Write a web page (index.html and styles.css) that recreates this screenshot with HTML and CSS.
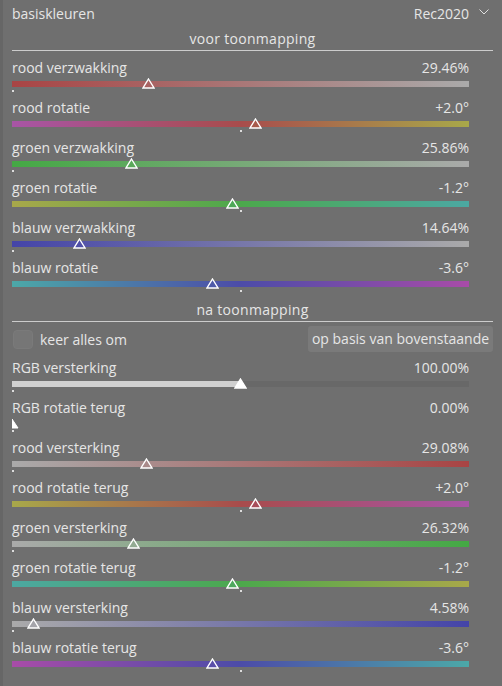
FILE: index.html
```html
<!DOCTYPE html>
<html>
<head>
<meta charset="utf-8">
<link rel="stylesheet" href="styles.css">
</head>
<body>
<div class="panel">
  <div class="header">
    <span>basiskleuren</span>
    <span class="combo">Rec2020<svg class="chev" width="10" height="6" viewBox="0 0 10 6"><polyline points="0.5,0.5 5,5 9.5,0.5" fill="none" stroke="#e0e0e0" stroke-width="1"/></svg></span>
  </div>

  <div class="section">voor toonmapping</div>

  <div class="sliders">
    <div class="slider">
      <div class="slabel"><span>rood verzwakking</span><span>29.46%</span></div>
      <div class="track red-att">
        <svg class="thumb" style="left:129.5px" width="13" height="11" viewBox="0 0 13 11"><polygon points="6.5,1 12,10 1,10" fill="#a96363" stroke="#fff" stroke-width="1.4"/></svg>
        <span class="dot dot-left"></span>
      </div>
    </div>
    <div class="slider">
      <div class="slabel"><span>rood rotatie</span><span>+2.0°</span></div>
      <div class="track red-rot">
        <svg class="thumb" style="left:236.5px" width="13" height="11" viewBox="0 0 13 11"><polygon points="6.5,1 12,10 1,10" fill="#a85a4c" stroke="#fff" stroke-width="1.4"/></svg>
        <span class="dot dot-mid"></span>
      </div>
    </div>
    <div class="slider">
      <div class="slabel"><span>groen verzwakking</span><span>25.86%</span></div>
      <div class="track green-att">
        <svg class="thumb" style="left:112.5px" width="13" height="11" viewBox="0 0 13 11"><polygon points="6.5,1 12,10 1,10" fill="#5aa95a" stroke="#fff" stroke-width="1.4"/></svg>
        <span class="dot dot-left"></span>
      </div>
    </div>
    <div class="slider">
      <div class="slabel"><span>groen rotatie</span><span>-1.2°</span></div>
      <div class="track green-rot">
        <svg class="thumb" style="left:213.5px" width="13" height="11" viewBox="0 0 13 11"><polygon points="6.5,1 12,10 1,10" fill="#4ea858" stroke="#fff" stroke-width="1.4"/></svg>
        <span class="dot dot-mid"></span>
      </div>
    </div>
    <div class="slider">
      <div class="slabel"><span>blauw verzwakking</span><span>14.64%</span></div>
      <div class="track blue-att">
        <svg class="thumb" style="left:60.5px" width="13" height="11" viewBox="0 0 13 11"><polygon points="6.5,1 12,10 1,10" fill="#5050a8" stroke="#fff" stroke-width="1.4"/></svg>
        <span class="dot dot-left"></span>
      </div>
    </div>
    <div class="slider">
      <div class="slabel"><span>blauw rotatie</span><span>-3.6°</span></div>
      <div class="track blue-rot">
        <svg class="thumb" style="left:193.5px" width="13" height="11" viewBox="0 0 13 11"><polygon points="6.5,1 12,10 1,10" fill="#4e5aa8" stroke="#fff" stroke-width="1.4"/></svg>
        <span class="dot dot-mid"></span>
      </div>
    </div>
  </div>

  <div class="section">na toonmapping</div>

  <div class="toggles">
    <label class="check"><span class="box"></span><span>keer alles om</span></label>
    <span class="button">op basis van bovenstaande</span>
  </div>

  <div class="sliders">
    <div class="slider">
      <div class="slabel"><span>RGB versterking</span><span>100.00%</span></div>
      <div class="track rgb-gain">
        <svg class="thumb" style="left:221.5px" width="13" height="11" viewBox="0 0 13 11"><polygon points="6.5,1 12,10 1,10" fill="#fff" stroke="#fff" stroke-width="1.4"/></svg>
        <span class="dot dot-left"></span>
      </div>
    </div>
    <div class="slider">
      <div class="slabel"><span>RGB rotatie terug</span><span>0.00%</span></div>
      <div class="track rgb-rot">
        <svg class="thumb" style="left:0" width="7" height="11" viewBox="0 0 7 11"><polygon points="0,1 6,10 0,10" fill="#fff" stroke="#fff" stroke-width="1"/></svg>
        <span class="dot dot-left"></span>
      </div>
    </div>
    <div class="slider">
      <div class="slabel"><span>rood versterking</span><span>29.08%</span></div>
      <div class="track red-gain">
        <svg class="thumb" style="left:127.5px" width="13" height="11" viewBox="0 0 13 11"><polygon points="6.5,1 12,10 1,10" fill="#a98a8a" stroke="#fff" stroke-width="1.4"/></svg>
        <span class="dot dot-left"></span>
      </div>
    </div>
    <div class="slider">
      <div class="slabel"><span>rood rotatie terug</span><span>+2.0°</span></div>
      <div class="track red-rot-back">
        <svg class="thumb" style="left:236.5px" width="13" height="11" viewBox="0 0 13 11"><polygon points="6.5,1 12,10 1,10" fill="#a84e5a" stroke="#fff" stroke-width="1.4"/></svg>
        <span class="dot dot-mid"></span>
      </div>
    </div>
    <div class="slider">
      <div class="slabel"><span>groen versterking</span><span>26.32%</span></div>
      <div class="track green-gain">
        <svg class="thumb" style="left:114.5px" width="13" height="11" viewBox="0 0 13 11"><polygon points="6.5,1 12,10 1,10" fill="#92aa92" stroke="#fff" stroke-width="1.4"/></svg>
        <span class="dot dot-left"></span>
      </div>
    </div>
    <div class="slider">
      <div class="slabel"><span>groen rotatie terug</span><span>-1.2°</span></div>
      <div class="track green-rot-back">
        <svg class="thumb" style="left:213.5px" width="13" height="11" viewBox="0 0 13 11"><polygon points="6.5,1 12,10 1,10" fill="#4ea85e" stroke="#fff" stroke-width="1.4"/></svg>
        <span class="dot dot-mid"></span>
      </div>
    </div>
    <div class="slider">
      <div class="slabel"><span>blauw versterking</span><span>4.58%</span></div>
      <div class="track blue-gain">
        <svg class="thumb" style="left:14.5px" width="13" height="11" viewBox="0 0 13 11"><polygon points="6.5,1 12,10 1,10" fill="#a4a4aa" stroke="#fff" stroke-width="1.4"/></svg>
        <span class="dot dot-left"></span>
      </div>
    </div>
    <div class="slider">
      <div class="slabel"><span>blauw rotatie terug</span><span>-3.6°</span></div>
      <div class="track blue-rot-back">
        <svg class="thumb" style="left:193.5px" width="13" height="11" viewBox="0 0 13 11"><polygon points="6.5,1 12,10 1,10" fill="#5a4ea8" stroke="#fff" stroke-width="1.4"/></svg>
        <span class="dot dot-mid"></span>
      </div>
    </div>
  </div>
</div>
</body>
</html>
```
FILE: styles.css
```css
html, body {
  margin: 0;
  padding: 0;
  background: #6f6f6f;
}
body {
  font-family: "Open Sans", "Noto Sans", sans-serif;
  font-size: 14px;
  color: #e6e6e6;
  width: 502px;
  height: 686px;
  overflow: hidden;
}
.panel {
  border-left: 3px solid #666666;
  padding: 0 9px 0 9px;
  height: 686px;
  box-sizing: border-box;
}
.header {
  height: 26px;
  display: flex;
  justify-content: space-between;
  align-items: center;
}
.combo {
  display: flex;
  align-items: center;
  padding-right: 4px;
}
.chev {
  margin-left: 10px;
  margin-top: -2px;
}
.section {
  text-align: center;
  line-height: 24px;
  height: 23px;
  padding-top: 1px;
  border-bottom: 1px solid #cccccc;
  letter-spacing: 0.3px;
}
.sliders {
  padding-right: 24px;
  padding-top: 6px;
}
.section + .sliders {
  padding-top: 6px;
}
.toggles + .sliders {
  padding-top: 5px;
}
.slider {
  height: 40px;
}
.slabel {
  display: flex;
  justify-content: space-between;
  height: 22px;
  line-height: 22px;
}
.track {
  position: relative;
  margin-top: 2px;
  height: 6px;
}
.thumb {
  position: absolute;
  top: -3px;
  display: block;
}
.dot {
  position: absolute;
  top: 9px;
  width: 2px;
  height: 2px;
  background: #dddddd;
}
.dot-left { left: 0; }
.dot-mid { left: 228px; }

.red-att { background: linear-gradient(to right, #a84444, #aaaaaa); }
.red-rot { background: linear-gradient(to right, #a855a6, #a84c4c 50%, #a8a84a); }
.green-att { background: linear-gradient(to right, #44a844, #aaaaaa); }
.green-rot { background: linear-gradient(to right, #a8a84a, #4ca84c 50%, #4ca8a2); }
.blue-att { background: linear-gradient(to right, #4444a8, #aaaaaa); }
.blue-rot { background: linear-gradient(to right, #4ca8a8, #4c4ca8 50%, #a84ca8); }
.rgb-gain { background: linear-gradient(to right, #d0d0d0 228px, #686868 228px); }
.rgb-rot { background: transparent; }
.red-gain { background: linear-gradient(to right, #aaaaaa, #a84444); }
.red-rot-back { background: linear-gradient(to right, #a8a84a, #a84c4c 50%, #a855a6); }
.green-gain { background: linear-gradient(to right, #aaaaaa, #44a844); }
.green-rot-back { background: linear-gradient(to right, #4ca8a2, #4ca84c 50%, #a8a84a); }
.blue-gain { background: linear-gradient(to right, #aaaaaa, #4444a8); }
.blue-rot-back { background: linear-gradient(to right, #a84ca8, #4c4ca8 50%, #4ca8a8); }

.toggles {
  margin-top: 4px;
  height: 26px;
  display: flex;
  justify-content: space-between;
  align-items: center;
}
.check {
  display: flex;
  align-items: center;
}
.box {
  width: 20px;
  height: 19px;
  margin-left: 1px;
  margin-right: 7px;
  border-radius: 4px;
  background: #767676;
  box-sizing: border-box;
  border: 1px solid #7a7a7a;
}
.button {
  height: 26px;
  line-height: 26px;
  width: 185px;
  box-sizing: border-box;
  padding: 0 3px;
  text-align: center;
  border-radius: 3px;
  background: #7a7a7a;
  white-space: nowrap;
}
```
